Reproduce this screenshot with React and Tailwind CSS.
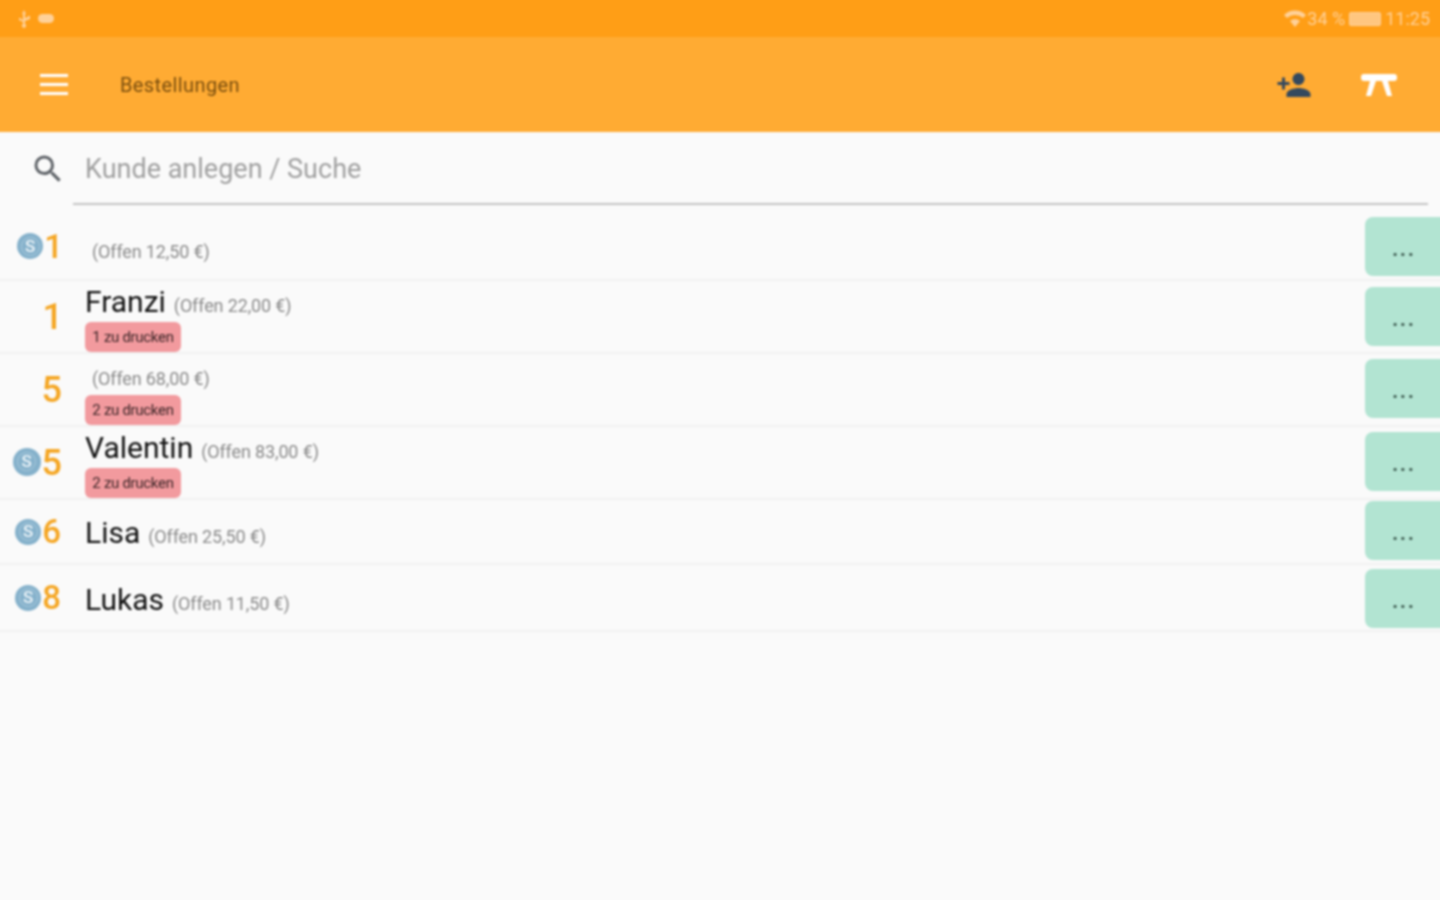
const rows = [
  { s: true, n: "1", offen: "(Offen 12,50 €)", h: "h-[68px]", pt: "pt-[12px]", btn: "mt-[4px]", sSize: "w-[26px] h-[26px]", nSize: "text-[33px]", gap: "ml-[1px] mr-[-1px]" },
  { n: "1", name: "Franzi", offen: "(Offen 22,00 €)", badge: "1 zu drucken", h: "h-[73px]", pt: "pt-[2px]", btn: "mt-[6px]", nSize: "text-[36px]", gap: "mr-[-1px]" },
  { n: "5", offen: "(Offen 68,00 €)", badge: "2 zu drucken", h: "h-[73px]", pt: "pt-[10px]", btn: "mt-[5px]", nSize: "text-[36px]", gap: "" },
  { s: true, n: "5", name: "Valentin", offen: "(Offen 83,00 €)", badge: "2 zu drucken", h: "h-[73px]", pt: "pt-[2px]", btn: "mt-[5px]", sSize: "w-[28px] h-[28px] mt-[-2px]", nSize: "text-[36px]", gap: "ml-[1px]" },
  { s: true, n: "6", name: "Lisa", offen: "(Offen 25,50 €)", h: "h-[65px]", pt: "pt-[3px]", btn: "mt-[1px]", sSize: "w-[26px] h-[26px]", nSize: "text-[33px]", gap: "ml-[1px] mr-[1px]" },
  { s: true, n: "8", name: "Lukas", offen: "(Offen 11,50 €)", h: "h-[67px]", pt: "pt-[5px]", btn: "mt-[4px]", sSize: "w-[26px] h-[26px]", nSize: "text-[33px]", gap: "ml-[1px] mr-[1px]" },
];

function SBadge({ size }) {
  return (
    <div className={`${size} shrink-0 rounded-full bg-[#85b1cb] flex items-center justify-center`}>
      <div className="w-[19px] h-[19px] rounded-full border border-[#a9c9dc] flex items-center justify-center text-[#eef5f9] text-[17px] font-medium leading-none">S</div>
    </div>
  );
}

function Row({ r }) {
  return (
    <div className={`${r.h} flex border-b-2 border-[#f1f1f1]`}>
      <div className="w-[66px] pl-[4px] shrink-0 flex items-center justify-end">
        {r.s && <SBadge size={r.sSize} />}
        <span className={`${r.nSize} ${r.gap} font-medium leading-none text-[#f5a623]`}>{r.n}</span>
      </div>
      <div className={`flex-1 ml-[23px] flex flex-col justify-center ${r.pt}`}>
        <div className={`flex items-baseline ${r.name ? "" : "pl-[7px]"}`}>
          {r.name && <span className="text-[30px] leading-[36px] text-[#111111] mr-[8px]">{r.name}</span>}
          <span className="text-[18px] leading-[30px] tracking-[-0.14px] text-[#8a8a8a]">{r.offen}</span>
        </div>
        {r.badge && (
          <div className="w-[96px] h-[30px] mt-[1px] rounded-[6px] bg-[#f29a9e] text-[15px] leading-[31px] text-center text-[#3a2426] whitespace-nowrap tracking-[-0.3px]">
            {r.badge}
          </div>
        )}
      </div>
      <div className={`w-[79px] pr-[4px] h-[59px] ${r.btn} shrink-0 rounded-l-[8px] bg-[#b2e4d2] flex items-end justify-center pb-[18px] pl-[3px] text-[20px] font-bold leading-[18px] tracking-[2px] text-[#2f4a40]`}>
        ...
      </div>
    </div>
  );
}

export default function App() {
  return (
    <div className="w-[1440px] h-[900px] overflow-hidden bg-[#fafafa]">
      <div className="w-[1448px] h-[908px] -ml-[4px] -mt-[4px] blur-[0.8px] bg-[#fafafa] font-['Roboto',sans-serif]">
        <div className="h-[41px] pt-[4px] bg-[#ff9e16] flex items-center justify-between pl-[21px] pr-[14px] text-[#ffd199] text-[18px]">
          <div className="flex items-center gap-[7px]">
            <svg width="14" height="18" viewBox="0 0 14 18" fill="#ffd199">
              <path d="M7 0l2 4H8v4l3-1V6h2v3L8 11v3a2 2 0 1 1-2 0v-2L2 10V8h2v1l2 1V4H5z" />
            </svg>
            <div className="w-[16px] h-[9px] rounded-full bg-[#ffd199]" />
          </div>
          <div className="flex items-center gap-[1px]">
            <svg width="22" height="18" viewBox="0 0 22 18" fill="#ffd199">
              <path d="M0 5a16 16 0 0 1 22 0l-3 3a12 12 0 0 0-16 0zM6 11a8 8 0 0 1 10 0l-5 6z" />
            </svg>
            <span>34 %</span>
            <div className="w-[32px] h-[14px] mx-[3px] border border-[#ffd199] rounded-[2px] bg-[#ffc680]" />
            <span>11:25</span>
          </div>
        </div>

        <div className="h-[95px] bg-[#ffab33] flex items-center">
          <div className="ml-[44px] w-[28px] flex flex-col gap-[6px]">
            <div className="h-[3px] bg-white" />
            <div className="h-[3px] bg-white" />
            <div className="h-[3px] bg-white" />
          </div>
          <div className="ml-[52px] text-[20px] tracking-[0.4px] text-[#7a4e0e] flex-1">Bestellungen</div>
          <svg width="36" height="36" viewBox="0 0 24 24" fill="#34495e" className="mr-[49px]">
            <path d="M15 12c2.21 0 4-1.79 4-4s-1.79-4-4-4-4 1.79-4 4 1.79 4 4 4zm-9-2V7H4v3H1v2h3v3h2v-3h3v-2H6zm9 4c-2.67 0-8 1.34-8 4v2h16v-2c0-2.66-5.33-4-8-4z" />
          </svg>
          <svg width="36" height="24" viewBox="0 0 36 24" fill="white" className="mr-[47px]">
            <rect x="0" y="1" width="36" height="7" rx="3" />
            <path d="M9 8h6l-5 15H5zM21 8h6l4 15h-5z" />
          </svg>
        </div>

        <div className="h-[73px] flex pt-[21px] pr-[16px]">
          <svg width="36" height="36" viewBox="0 0 24 24" fill="#5f6368" className="ml-[34px] mt-[-2px]">
            <path d="M15.5 14h-.79l-.28-.27A6.47 6.47 0 0 0 16 9.5 6.5 6.5 0 1 0 9.5 16c1.61 0 3.09-.59 4.23-1.57l.27.28v.79l5 4.99L20.49 19l-4.99-5zm-6 0C7.01 14 5 11.99 5 9.5S7.01 5 9.5 5 14 7.01 14 9.5 11.99 14 9.5 14z" />
          </svg>
          <div className="flex-1 ml-[7px] border-b-2 border-[#c4c4c4]">
            <div className="ml-[12px] text-[27px] leading-[32px] text-[#a0a0a0]">Kunde anlegen / Suche</div>
          </div>
        </div>

        <div className="pt-[8px]">
          {rows.map((r, i) => (
            <Row key={i} r={r} />
          ))}
        </div>
      </div>
    </div>
  );
}
